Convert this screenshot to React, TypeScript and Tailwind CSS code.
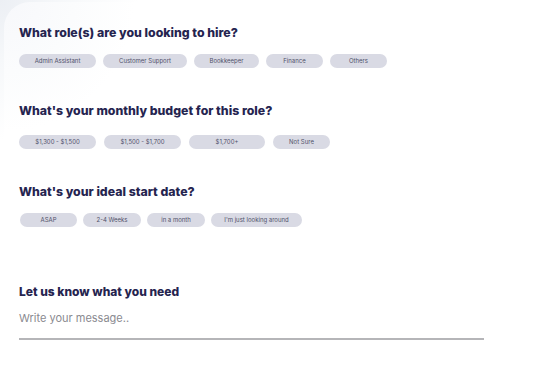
import React from "react";

const Pill = ({ label, w }: { label: string; w: string }) => (
  <div
    className={`${w} h-[14px] rounded-full bg-[#d9dae4] flex items-center justify-center text-[6px] text-[#50516a] leading-none`}
  >
    {label}
  </div>
);

export default function App() {
  return (
    <div
      className="w-[551px] h-[375px] overflow-hidden bg-[radial-gradient(circle_at_0_0,#eceff4_0px,#f6f8fa_60px,#ffffff_140px)]"
      style={{ fontFamily: "Inter, 'Noto Sans', sans-serif" }}
    >
      <div className="ml-[4px] mt-[2px] h-[373px] rounded-tl-[26px] bg-[radial-gradient(circle_at_0_0,#f7f8fb_0px,#fbfcfd_70px,#ffffff_130px)]">
        <div className="flex flex-col pl-[15px] pt-[22px]">
          <h2 className="text-[12.3px] leading-[18px] font-extrabold text-[#25244f]">
            What role(s) are you looking to hire?
          </h2>
          <div className="flex gap-[7px] mt-[12px]">
            <Pill label="Admin Assistant" w="w-[77px]" />
            <Pill label="Customer Support" w="w-[84px]" />
            <Pill label="Bookkeeper" w="w-[65px]" />
            <Pill label="Finance" w="w-[57px]" />
            <Pill label="Others" w="w-[57px]" />
          </div>
          <h2 className="mt-[34px] text-[12.3px] leading-[18px] font-extrabold text-[#25244f]">
            What's your monthly budget for this role?
          </h2>
          <div className="flex gap-[8px] mt-[15px]">
            <Pill label="$1,300 - $1,500" w="w-[77px]" />
            <Pill label="$1,500 - $1,700" w="w-[77px]" />
            <Pill label="$1,700+" w="w-[76px]" />
            <Pill label="Not Sure" w="w-[57px]" />
          </div>
          <h2 className="mt-[34px] text-[12.3px] leading-[18px] font-extrabold text-[#25244f]">
            What's your ideal start date?
          </h2>
          <div className="flex gap-[6px] mt-[12px] pl-[1px]">
            <Pill label="ASAP" w="w-[57px]" />
            <Pill label="2-4 Weeks" w="w-[58px]" />
            <Pill label="in a month" w="w-[58px]" />
            <Pill label="I'm just looking around" w="w-[91px]" />
          </div>
          <h3 className="mt-[57px] text-[12px] leading-[16px] font-extrabold text-[#25244f]">
            Let us know what you need
          </h3>
          <div className="mt-[11px] w-[465px] border-b-[2px] border-[#b5b5b8] pb-[13px] text-[11px] leading-[14px] text-[#8a8a90]">
            Write your message..
          </div>
        </div>
      </div>
    </div>
  );
}
